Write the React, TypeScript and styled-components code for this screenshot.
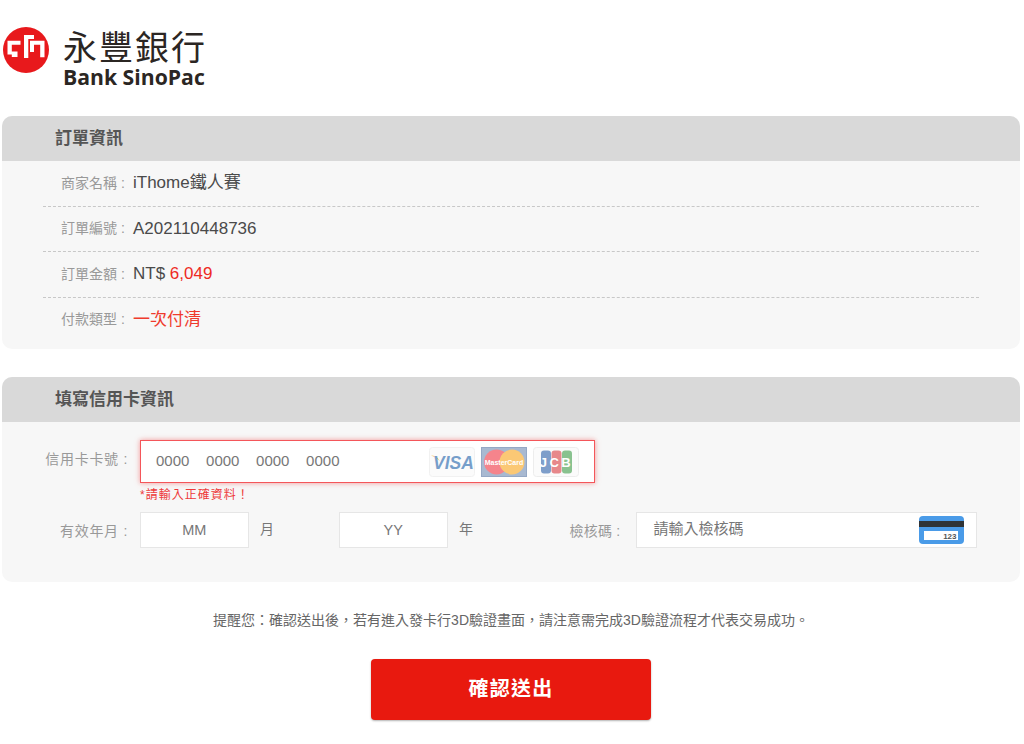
import styled, { createGlobalStyle } from 'styled-components';

const GlobalStyle = createGlobalStyle`
    html, body {
        margin: 0;
        padding: 0;
        background: #fff;
        font-family: "Liberation Sans", "Noto Sans CJK TC", sans-serif;
    }
    * {
        box-sizing: border-box;
    }
`;

const Page = styled.div`
    width: 1024px;
    height: 744px;
    overflow: hidden;
    padding: 0 4px 0 2px;
`;

const Logo = styled.div`
    height: 116px;
    padding: 27px 0 0 1px;
    display: flex;
    align-items: flex-start;
    gap: 14px;
`;

const LogoText = styled.div`
    display: flex;
    flex-direction: column;
    color: #2b2623;
`;

const LogoChinese = styled.div`
    margin-top: -1px;
    font-size: 34px;
    line-height: 40px;
    letter-spacing: 2px;
    font-family: "Noto Sans CJK TC", sans-serif;
    font-weight: 400;
    white-space: nowrap;
`;

const LogoEnglish = styled.div`
    font-family: "Open Sans", sans-serif;
    font-size: 21.2px;
    line-height: 22px;
    font-weight: 700;
    white-space: nowrap;
`;

const Card = styled.section<{ $height: number }>`
    height: ${(p) => p.$height}px;
    background: #f7f7f7;
    border-radius: 10px;
    overflow: hidden;
    margin-bottom: 28px;
`;

const CardTitle = styled.h2`
    margin: 0;
    height: 45px;
    background: #d9d9d9;
    padding-left: 53px;
    font-size: 17px;
    line-height: 46px;
    font-weight: 700;
    color: #555;
`;

const InfoList = styled.div`
    margin: 0 41px;
`;

const InfoRow = styled.div`
    height: 45.5px;
    display: flex;
    align-items: center;
    padding-left: 18px;
    border-bottom: 1px dashed #c8c8c8;
    &:last-child {
        border-bottom: none;
        padding-bottom: 1px;
    }
`;

const InfoLabel = styled.span`
    width: 72px;
    margin-bottom: 1px;
    font-size: 14px;
    line-height: 20px;
    color: #999;
    white-space: nowrap;
`;

const InfoValue = styled.span<{ $red?: boolean }>`
    font-size: 17px;
    line-height: 24px;
    color: ${(p) => (p.$red ? '#ef3b2d' : '#4a4a4a')};
`;

const Amount = styled.span`
    color: #ee2a24;
`;

const FormBody = styled.div`
    padding: 18px 0 0 0;
`;

const FieldRow = styled.div`
    display: flex;
    align-items: center;
`;

const FieldLabel = styled.label<{ $raised?: boolean }>`
    width: 138px;
    padding-right: 12px;
    margin-bottom: ${(p) => (p.$raised ? 8 : 0)}px;
    text-align: right;
    font-size: 14px;
    color: #999;
    white-space: nowrap;
    letter-spacing: 0.7px;
`;

const CardNumberBox = styled.div`
    width: 455px;
    height: 43px;
    background: #fff;
    border: 1px solid #f4565a;
    box-shadow: 0 0 5px rgba(240, 70, 70, 0.55);
    display: flex;
    align-items: center;
    padding-left: 15px;
`;

const CardNumber = styled.div`
    flex: 1;
    font-size: 15px;
    color: #777;
    word-spacing: 12.5px;
    padding-bottom: 3px;
    white-space: nowrap;
`;

const Brands = styled.div`
    display: flex;
    align-items: center;
    gap: 6px;
    margin-right: 15px;
`;

const BrandTile = styled.div`
    width: 46px;
    height: 30px;
    opacity: 0.6;
    line-height: 0;
`;

const ErrorText = styled.div`
    margin: 5px 0 9px 138px;
    font-size: 12px;
    line-height: 15px;
    color: #ee3a3a;
    letter-spacing: 1px;
`;

const ShortBox = styled.div`
    width: 108.5px;
    height: 36px;
    background: #fff;
    border: 1px solid #e6e6e6;
    text-align: center;
    font-size: 14.5px;
    line-height: 34px;
    color: #777;
`;

const Unit = styled.span<{ $width: number }>`
    width: ${(p) => p.$width}px;
    padding-left: 11.5px;
    font-size: 14px;
    color: #777;
    margin-top: -4px;
`;

const CvcLabel = styled.label`
    width: 66px;
    font-size: 14px;
    color: #999;
    white-space: nowrap;
    letter-spacing: 0.2px;
`;

const CvcBox = styled.div`
    width: 341px;
    height: 36px;
    background: #fff;
    border: 1px solid #e6e6e6;
    display: flex;
    align-items: center;
    justify-content: space-between;
    padding: 0 12px 0 17px;
    font-size: 15px;
    color: #777;
`;

const CvcHint = styled.span`
    padding-bottom: 6px;
`;

const Notice = styled.p`
    margin: 0;
    text-align: center;
    font-size: 14px;
    line-height: 20px;
    color: #666;
`;

const SubmitRow = styled.div`
    display: flex;
    justify-content: center;
    padding: 29px 0 0 0;
`;

const SubmitButton = styled.button`
    width: 280px;
    height: 61px;
    padding: 0 0 4px;
    border: none;
    border-radius: 4px;
    background: #e8190f;
    box-shadow: 0 1px 2px rgba(0, 0, 0, 0.3);
    color: #fff;
    font-family: inherit;
    font-size: 20px;
    font-weight: 700;
    letter-spacing: 1.2px;
`;

const LogoMark = () => (
    <svg width="46" height="46" viewBox="0 0 46 46">
        <circle cx="23" cy="23" r="23" fill="#e8191c" />
        <g fill="#fff">
            <path d="M4.500 13.700H17.500V17.800H8.800v6.700H14.500V30H8.800V27.500H4.500z" />
            <path d="M21 8h10v4H25.300V31H21z" />
            <path d="M27 13.700h14.500V30.300H37.200V17.800H31V25h-4z" />
        </g>
    </svg>
);

const Visa = () => (
    <BrandTile>
        <svg width="46" height="30" viewBox="0 0 46 30">
            <rect x="0.500" y="0.500" width="45" height="29" rx="3" fill="#fafafa" stroke="#e8e8e8" />
            <path d="M2 8.500c4-.500 7 1.500 9 6-2-2.500-5-4.500-9-6z" fill="#f3a81c" />
            <text x="4" y="21.500" fontSize="17.500" fontWeight="700" fontStyle="italic" fill="#1a5fa8" fontFamily="Liberation Sans">
                VISA
            </text>
        </svg>
    </BrandTile>
);

const MasterCard = () => (
    <BrandTile>
        <svg width="46" height="30" viewBox="0 0 46 30">
            <rect width="46" height="30" fill="#4f70a0" />
            <rect x="1" y="1" width="44" height="28" fill="#6f8bb3" />
            <circle cx="15.500" cy="15" r="12.500" fill="#ef3340" />
            <circle cx="31" cy="15" r="12.500" fill="#f9a51a" />
            <text x="23" y="17.500" textAnchor="middle" fontSize="7" fontWeight="700" fill="#fff" fontFamily="Liberation Sans">
                MasterCard
            </text>
        </svg>
    </BrandTile>
);

const Jcb = () => (
    <BrandTile>
        <svg width="46" height="30" viewBox="0 0 46 30">
            <rect x="0.500" y="0.500" width="45" height="29" rx="3" fill="#fafafa" stroke="#e2e2e2" />
            <rect x="8" y="3.500" width="10" height="23" rx="3" fill="#2a5fa8" />
            <rect x="18.500" y="3.500" width="10" height="23" rx="3" fill="#d83a3f" />
            <rect x="29" y="3.500" width="10" height="23" rx="3" fill="#3c9b46" />
            <text x="23.500" y="20" textAnchor="middle" fontSize="13" fontWeight="700" letterSpacing="2.500" fill="#fff" fontFamily="Liberation Sans">
                JCB
            </text>
        </svg>
    </BrandTile>
);

const CvcIcon = () => (
    <svg width="45" height="28" viewBox="0 0 45 28">
        <rect width="45" height="28" rx="4" fill="#4a9be8" />
        <rect y="5" width="45" height="6" fill="#2f3336" />
        <rect x="5" y="15" width="34" height="9" fill="#fff" />
        <text x="37.500" y="23" textAnchor="end" fontSize="8" fontWeight="700" fill="#555" fontFamily="Liberation Sans">
            123
        </text>
    </svg>
);

const App = () => {
    return (
        <Page>
            <GlobalStyle />
            <Logo>
                <LogoMark />
                <LogoText>
                    <LogoChinese>永豐銀行</LogoChinese>
                    <LogoEnglish>Bank SinoPac</LogoEnglish>
                </LogoText>
            </Logo>

            <Card $height={233}>
                <CardTitle>訂單資訊</CardTitle>
                <InfoList>
                    <InfoRow>
                        <InfoLabel>商家名稱 :</InfoLabel>
                        <InfoValue>iThome鐵人賽</InfoValue>
                    </InfoRow>
                    <InfoRow>
                        <InfoLabel>訂單編號 :</InfoLabel>
                        <InfoValue>A202110448736</InfoValue>
                    </InfoRow>
                    <InfoRow>
                        <InfoLabel>訂單金額 :</InfoLabel>
                        <InfoValue>
                            NT$ <Amount>6,049</Amount>
                        </InfoValue>
                    </InfoRow>
                    <InfoRow>
                        <InfoLabel>付款類型 :</InfoLabel>
                        <InfoValue $red>一次付清</InfoValue>
                    </InfoRow>
                </InfoList>
            </Card>

            <Card $height={205}>
                <CardTitle>填寫信用卡資訊</CardTitle>
                <FormBody>
                    <FieldRow>
                        <FieldLabel $raised>信用卡卡號 :</FieldLabel>
                        <CardNumberBox>
                            <CardNumber>0000 0000 0000 0000</CardNumber>
                            <Brands>
                                <Visa />
                                <MasterCard />
                                <Jcb />
                            </Brands>
                        </CardNumberBox>
                    </FieldRow>
                    <ErrorText>*請輸入正確資料！</ErrorText>
                    <FieldRow>
                        <FieldLabel>有效年月 :</FieldLabel>
                        <ShortBox>MM</ShortBox>
                        <Unit $width={90.5}>月</Unit>
                        <ShortBox>YY</ShortBox>
                        <Unit $width={122}>年</Unit>
                        <CvcLabel>檢核碼 :</CvcLabel>
                        <CvcBox>
                            <CvcHint>請輸入檢核碼</CvcHint>
                            <CvcIcon />
                        </CvcBox>
                    </FieldRow>
                </FormBody>
            </Card>

            <Notice>提醒您：確認送出後，若有進入發卡行3D驗證畫面，請注意需完成3D驗證流程才代表交易成功。</Notice>
            <SubmitRow>
                <SubmitButton>確認送出</SubmitButton>
            </SubmitRow>
        </Page>
    );
};

export default App;
